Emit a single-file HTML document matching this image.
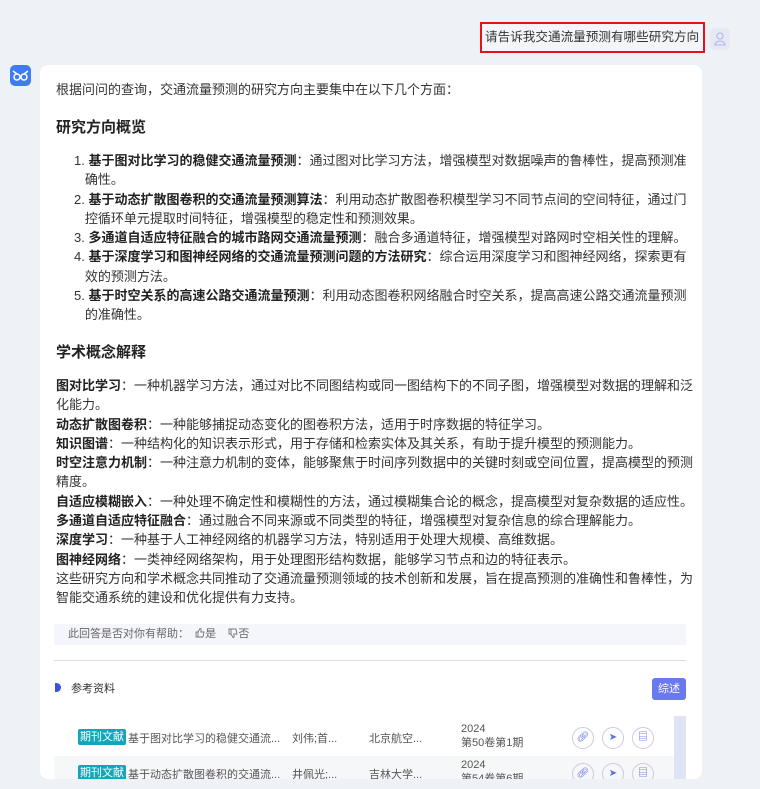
<!DOCTYPE html>
<html><head><meta charset="utf-8"><style>
*{margin:0;padding:0;box-sizing:border-box}
body{width:760px;height:789px;overflow:hidden;background:#eef1f5;font-family:"Liberation Sans","Noto Sans CJK SC",sans-serif;color:#333;font-size:13px;position:relative}
.q{position:absolute;left:480px;top:22px;width:225px;height:31px;border:2px solid #e8101a;background:#f3f5f8;font-size:12.6px;line-height:27px;padding-left:3px;color:#333;white-space:nowrap;overflow:hidden}
.uav{position:absolute;left:710px;top:28px;width:20px;height:22px;border-radius:5px;background:#e6e8f4}
.bav{position:absolute;left:10px;top:65px;width:21px;height:21px;border-radius:5px;background:#3f7cf4}
.card{position:absolute;left:40px;top:65px;width:662px;height:714px;background:#fff;border-radius:8px;overflow:hidden}
.t{position:absolute;left:16px;white-space:nowrap;line-height:19.3px}
b{font-weight:bold;color:#222}
h3{position:absolute;left:16px;font-size:15px;font-weight:bold;color:#222;white-space:nowrap}
.n{position:absolute;white-space:nowrap;left:34px}
.fb{position:absolute;left:14px;top:559px;width:632px;height:21px;background:#f5f6fb;font-size:11px;color:#666;line-height:21px;padding-left:14px}
.hr{position:absolute;left:14px;top:595px;width:632px;height:1px;background:#ddd}
.row{position:absolute;left:14px;width:624px;height:36px;font-size:11px;color:#555}
.tag{position:absolute;left:24px;top:9px;background:#11a6b8;color:#fff;font-size:11px;padding:0 2px;border-radius:2px;line-height:16px}
.ic{position:absolute;width:22px;height:22px;border:1px solid #ccd;border-radius:50%;top:7px;color:#5b6fe0;font-size:10px;text-align:center;line-height:20px}
</style></head><body>
<div class="q">请告诉我交通流量预测有哪些研究方向</div>
<div class="uav"><svg width="20" height="22" viewBox="0 0 20 22"><circle cx="10" cy="8" r="3" fill="none" stroke="#b9bdf0" stroke-width="1.3"/><path d="M5 17a5 4 0 0 1 10 0z" fill="none" stroke="#b9bdf0" stroke-width="1.3"/></svg></div>
<div class="bav"><svg width="21" height="21" viewBox="0 0 21 21"><circle cx="7" cy="12" r="3" fill="none" stroke="#fff" stroke-width="1.5"/><circle cx="14" cy="12" r="3" fill="none" stroke="#fff" stroke-width="1.5"/><path d="M3 6l4 3M18 6l-4 3" stroke="#fff" stroke-width="1.5"/></svg></div>
<div class="card">
<div class="t" style="top:15px">根据问问的查询，交通流量预测的研究方向主要集中在以下几个方面：</div>
<h3 style="top:51px">研究方向概览</h3>
<div class="n" style="top:86px;line-height:19.3px">1. <b>基于图对比学习的稳健交通流量预测</b>：通过图对比学习方法，增强模型对数据噪声的鲁棒性，提高预测准<br>&nbsp;&nbsp;&nbsp;确性。<br>2. <b>基于动态扩散图卷积的交通流量预测算法</b>：利用动态扩散图卷积模型学习不同节点间的空间特征，通过门<br>&nbsp;&nbsp;&nbsp;控循环单元提取时间特征，增强模型的稳定性和预测效果。<br>3. <b>多通道自适应特征融合的城市路网交通流量预测</b>：融合多通道特征，增强模型对路网时空相关性的理解。<br>4. <b>基于深度学习和图神经网络的交通流量预测问题的方法研究</b>：综合运用深度学习和图神经网络，探索更有<br>&nbsp;&nbsp;&nbsp;效的预测方法。<br>5. <b>基于时空关系的高速公路交通流量预测</b>：利用动态图卷积网络融合时空关系，提高高速公路交通流量预测<br>&nbsp;&nbsp;&nbsp;的准确性。</div>
<h3 style="top:276px">学术概念解释</h3>
<div class="t" style="top:311px"><b>图对比学习</b>：一种机器学习方法，通过对比不同图结构或同一图结构下的不同子图，增强模型对数据的理解和泛<br>化能力。<br><b>动态扩散图卷积</b>：一种能够捕捉动态变化的图卷积方法，适用于时序数据的特征学习。<br><b>知识图谱</b>：一种结构化的知识表示形式，用于存储和检索实体及其关系，有助于提升模型的预测能力。<br><b>时空注意力机制</b>：一种注意力机制的变体，能够聚焦于时间序列数据中的关键时刻或空间位置，提高模型的预测<br>精度。<br><b>自适应模糊嵌入</b>：一种处理不确定性和模糊性的方法，通过模糊集合论的概念，提高模型对复杂数据的适应性。<br><b>多通道自适应特征融合</b>：通过融合不同来源或不同类型的特征，增强模型对复杂信息的综合理解能力。<br><b>深度学习</b>：一种基于人工神经网络的机器学习方法，特别适用于处理大规模、高维数据。<br><b>图神经网络</b>：一类神经网络架构，用于处理图形结构数据，能够学习节点和边的特征表示。<br>这些研究方向和学术概念共同推动了交通流量预测领域的技术创新和发展，旨在提高预测的准确性和鲁棒性，为<br>智能交通系统的建设和优化提供有力支持。</div>
<div class="fb">此回答是否对你有帮助：&nbsp;&nbsp;<svg width="10" height="10" viewBox="0 0 10 10" style="vertical-align:-1px"><path d="M1 4h2v5H1zM3 4l2-3.5c1 0 1.3.6 1.1 1.5L5.8 4H9l-1 5H3" fill="none" stroke="#777" stroke-width=".9"/></svg>是&nbsp;&nbsp;&nbsp;&nbsp;<svg width="10" height="10" viewBox="0 0 10 10" style="vertical-align:-1px"><path d="M1 1h2v5H1zM3 6l2 3.5c1 0 1.3-.6 1.1-1.5L5.8 6H9l-1-5H3" fill="none" stroke="#777" stroke-width=".9"/></svg>否</div>
<div class="hr"></div>
<div style="position:absolute;left:15px;top:618px;width:6px;height:9px;background:#3a52e0;border-radius:0 5px 5px 0"></div>
<div style="position:absolute;left:31px;top:615px;font-size:11px;color:#333">参考资料</div>
<div style="position:absolute;left:612px;top:613px;width:34px;height:22px;background:#6b79ee;color:#fff;font-size:11px;text-align:center;line-height:22px;border-radius:3px">综述</div>
<div style="position:absolute;left:634px;top:651px;width:12px;height:70px;background:#dfe3f6"></div>
<div class="row" style="top:655px"><span class="tag">期刊文献</span><span style="position:absolute;left:74px;top:10px">基于图对比学习的稳健交通流...</span><span style="position:absolute;left:238px;top:10px">刘伟;首...</span><span style="position:absolute;left:315px;top:10px">北京航空...</span><span style="position:absolute;left:407px;top:2px;line-height:14px">2024<br>第50卷第1期</span><span class="ic" style="left:518px">🔗︎</span><span class="ic" style="left:548px">➤</span><span class="ic" style="left:578px">▤</span></div>
<div class="row" style="top:691px;background:#f6f7f9;width:620px"><span class="tag">期刊文献</span><span style="position:absolute;left:74px;top:10px">基于动态扩散图卷积的交通流...</span><span style="position:absolute;left:238px;top:10px">井佩光;...</span><span style="position:absolute;left:315px;top:10px">吉林大学...</span><span style="position:absolute;left:407px;top:2px;line-height:14px">2024<br>第54卷第6期</span><span class="ic" style="left:518px">🔗︎</span><span class="ic" style="left:548px">➤</span><span class="ic" style="left:578px">▤</span></div>
</div>
</body></html>
